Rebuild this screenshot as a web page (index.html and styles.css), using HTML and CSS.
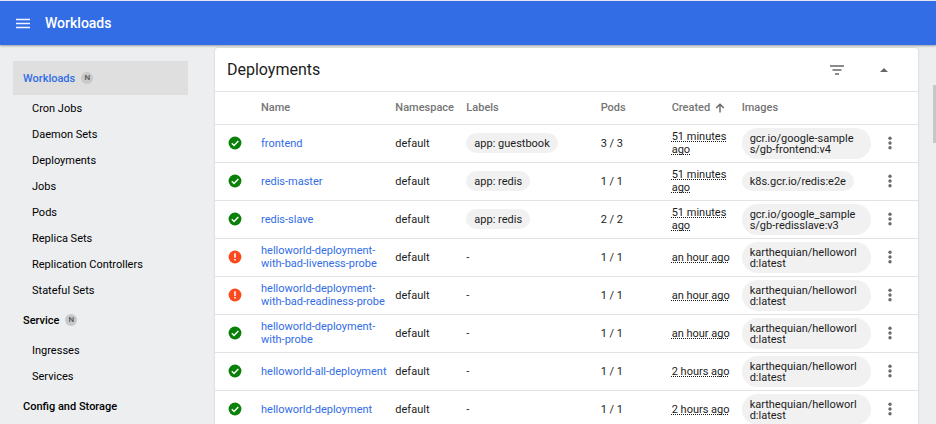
FILE: index.html
```
<!DOCTYPE html>
<html lang="en">
<head>
<meta charset="utf-8">
<title>Workloads</title>
<link rel="stylesheet" href="styles.css">
</head>
<body>
<svg class="sprite" aria-hidden="true">
  <symbol id="ok" viewBox="0 0 24 24"><circle cx="12" cy="12" r="11" fill="#098109"/><path d="M6.500 12.500l3.800 3.700 7.400-7.700" fill="none" stroke="#fff" stroke-width="2.400"/></symbol>
  <symbol id="error" viewBox="0 0 24 24"><circle cx="12" cy="12" r="11" fill="#fb4a1f"/><path d="M12 5.500v8M12 15.500v2.700" fill="none" stroke="#fff" stroke-width="2.600"/></symbol>
  <symbol id="more" viewBox="0 0 16 16"><g fill="#6b6b6b"><circle cx="8" cy="3.200" r="1.700"/><circle cx="8" cy="8" r="1.700"/><circle cx="8" cy="12.800" r="1.700"/></g></symbol>
</svg>
<div class="app">
  <header class="topbar">
    <button class="icon-button" aria-label="Toggle navigation"><svg width="16" height="12" viewBox="0 0 16 12"><path d="M1 2.500h14M1 6.500h14M1 10.500h14" stroke="#f1f5fe" stroke-width="1.400"/></svg></button>
    <h1>Workloads</h1>
  </header>
  <div class="body">
    <nav class="sidebar">
      <a class="group active" href="#workloads">Workloads <span class="badge">N</span></a>
      <a class="item" href="#cron">Cron Jobs</a>
      <a class="item" href="#daemon">Daemon Sets</a>
      <a class="item" href="#deployments">Deployments</a>
      <a class="item" href="#jobs">Jobs</a>
      <a class="item" href="#pods">Pods</a>
      <a class="item" href="#replicasets">Replica Sets</a>
      <a class="item" href="#controllers">Replication Controllers</a>
      <a class="item" href="#stateful">Stateful Sets</a>
      <a class="group" href="#service">Service <span class="badge">N</span></a>
      <a class="item" href="#ingresses">Ingresses</a>
      <a class="item" href="#services">Services</a>
      <a class="group" href="#config">Config and Storage</a>
    </nav>
    <main class="content">
      <section class="card">
        <div class="card-head">
          <h2>Deployments</h2>
          <button class="icon-button" aria-label="Filter"><svg width="16" height="12" viewBox="0 0 16 12"><path d="M1 2h14M3.500 6h9M6 10h4" stroke="#666" stroke-width="1.500"/></svg></button>
          <button class="icon-button" aria-label="Collapse"><svg width="16" height="12" viewBox="0 0 16 12"><path d="M4 8l4-4 4 4z" fill="#666"/></svg></button>
        </div>
        <table>
          <colgroup><col class="c-status"><col><col class="c-short"><col><col class="c-short"><col class="c-created"><col><col class="c-menu"></colgroup>
          <thead><tr><th></th><th>Name</th><th>Namespace</th><th>Labels</th><th>Pods</th><th><span class="sort">Created <svg width="10" height="10" viewBox="0 0 10 10"><path d="M5 9.500V1.500M1.200 5L5 1.200 8.800 5" fill="none" stroke="#666" stroke-width="1.400"/></svg></span></th><th>Images</th><th></th></tr></thead>
          <tbody>
            <tr><td><svg class="status"><use href="#ok"/></svg></td><td><a href="#d1">frontend</a></td><td>default</td><td><span class="chip">app: guestbook</span></td><td>3 / 3</td><td><span class="time">51 minutes ago</span></td><td><span class="chip image">gcr.io/google-samples/gb-frontend:v4</span></td><td><button class="icon-button" aria-label="Actions"><svg class="more"><use href="#more"/></svg></button></td></tr>
            <tr><td><svg class="status"><use href="#ok"/></svg></td><td><a href="#d2">redis-master</a></td><td>default</td><td><span class="chip">app: redis</span></td><td>1 / 1</td><td><span class="time">51 minutes ago</span></td><td><span class="chip image">k8s.gcr.io/redis:e2e</span></td><td><button class="icon-button" aria-label="Actions"><svg class="more"><use href="#more"/></svg></button></td></tr>
            <tr><td><svg class="status"><use href="#ok"/></svg></td><td><a href="#d3">redis-slave</a></td><td>default</td><td><span class="chip">app: redis</span></td><td>2 / 2</td><td><span class="time">51 minutes ago</span></td><td><span class="chip image">gcr.io/google_samples/gb-redisslave:v3</span></td><td><button class="icon-button" aria-label="Actions"><svg class="more"><use href="#more"/></svg></button></td></tr>
            <tr><td><svg class="status"><use href="#error"/></svg></td><td><a href="#d4">helloworld-deployment-with-bad-liveness-probe</a></td><td>default</td><td>-</td><td>1 / 1</td><td><span class="time">an hour ago</span></td><td><span class="chip image">karthequian/helloworld:latest</span></td><td><button class="icon-button" aria-label="Actions"><svg class="more"><use href="#more"/></svg></button></td></tr>
            <tr><td><svg class="status"><use href="#error"/></svg></td><td><a href="#d5">helloworld-deployment-with-bad-readiness-probe</a></td><td>default</td><td>-</td><td>1 / 1</td><td><span class="time">an hour ago</span></td><td><span class="chip image">karthequian/helloworld:latest</span></td><td><button class="icon-button" aria-label="Actions"><svg class="more"><use href="#more"/></svg></button></td></tr>
            <tr><td><svg class="status"><use href="#ok"/></svg></td><td><a href="#d6">helloworld-deployment-with-probe</a></td><td>default</td><td>-</td><td>1 / 1</td><td><span class="time">an hour ago</span></td><td><span class="chip image">karthequian/helloworld:latest</span></td><td><button class="icon-button" aria-label="Actions"><svg class="more"><use href="#more"/></svg></button></td></tr>
            <tr><td><svg class="status"><use href="#ok"/></svg></td><td><a href="#d7">helloworld-all-deployment</a></td><td>default</td><td>-</td><td>1 / 1</td><td><span class="time">2 hours ago</span></td><td><span class="chip image">karthequian/helloworld:latest</span></td><td><button class="icon-button" aria-label="Actions"><svg class="more"><use href="#more"/></svg></button></td></tr>
            <tr><td><svg class="status"><use href="#ok"/></svg></td><td><a href="#d8">helloworld-deployment</a></td><td>default</td><td>-</td><td>1 / 1</td><td><span class="time">2 hours ago</span></td><td><span class="chip image">karthequian/helloworld:latest</span></td><td><button class="icon-button" aria-label="Actions"><svg class="more"><use href="#more"/></svg></button></td></tr>
          </tbody>
        </table>
      </section>
      <div class="scroll-thumb"></div>
    </main>
  </div>
</div>
</body>
</html>
```
FILE: styles.css
```
* { box-sizing: border-box; }
body {
  margin: 0;
  background: #edeef0;
  color: #1c1c1c;
  font: 11px/13px Roboto, "Liberation Sans", sans-serif;
}
a { color: #326de6; text-decoration: none; }
svg { display: block; }
.sprite { position: absolute; width: 0; height: 0; }
.app { display: flex; flex-direction: column; height: 100vh; overflow: hidden; }
.icon-button { display: flex; padding: 0; border: 0; background: none; }

.topbar {
  display: flex;
  flex: none;
  align-items: center;
  gap: 14px;
  height: 45px;
  padding: 0 15px;
  border-top: 1px solid #e4e7ee;
  background: #326de6;
  box-shadow: 0 1px 2px rgba(0, 0, 0, .35);
  z-index: 1;
}
.topbar h1 { margin: 0; color: #fff; font-size: 14px; line-height: 20px; font-weight: 500; }

.body { display: flex; flex: 1; min-height: 0; }
.sidebar { flex: none; width: 188px; padding: 16px 0 0 13px; }
.sidebar a { display: flex; align-items: center; color: #000; }
.sidebar .group { gap: 6px; height: 34px; padding-left: 10px; font-weight: 500; }
.sidebar .active { background: #dfdfdf; color: #326de6; }
.sidebar .item { height: 26px; padding-left: 19px; }
.badge {
  width: 12px;
  height: 12px;
  border-radius: 50%;
  background: #c9c9c9;
  color: #555;
  font-size: 8px;
  line-height: 12px;
  text-align: center;
}

.content { position: relative; flex: 1; min-width: 0; padding: 3px 18px 0 27px; }
.card { border-radius: 3px; background: #fff; box-shadow: 0 0 2px rgba(0, 0, 0, .2); }
.card-head { display: flex; align-items: center; gap: 31px; height: 44px; padding: 0 26px 0 12px; border-bottom: 1px solid #e2e2e2; }
.card-head h2 { flex: 1; margin: 0; font-size: 16px; line-height: 20px; font-weight: 400; }

table { width: 100%; border-collapse: collapse; table-layout: fixed; }
.c-status { width: 46px; }
.c-short { width: 71px; }
.c-created { width: 70px; }
.c-menu { width: 42px; }
th, td { padding: 0; border-bottom: 1px solid #e2e2e2; text-align: left; vertical-align: middle; }
th { height: 32px; color: #757575; font-weight: 500; }
td { height: 38px; }
td:first-child { padding-left: 13px; }
td:nth-child(2) { padding-right: 6px; }
td:last-child { padding-left: 6px; }
.sort { display: flex; align-items: center; gap: 5px; }
.status { width: 14px; height: 14px; }
.more { width: 16px; height: 16px; }
.chip { display: inline-block; padding: 5px 8px 4px; border-radius: 16px; background: #f1f1f1; line-height: 11px; vertical-align: middle; }
.image { max-width: 129px; word-break: break-all; }
.time { text-decoration: underline dotted 1px; text-underline-offset: 1px; text-decoration-skip-ink: none; }

.scroll-thumb { position: absolute; top: 40px; right: 0; width: 3px; height: 58px; background: #c6c7c9; }
```
